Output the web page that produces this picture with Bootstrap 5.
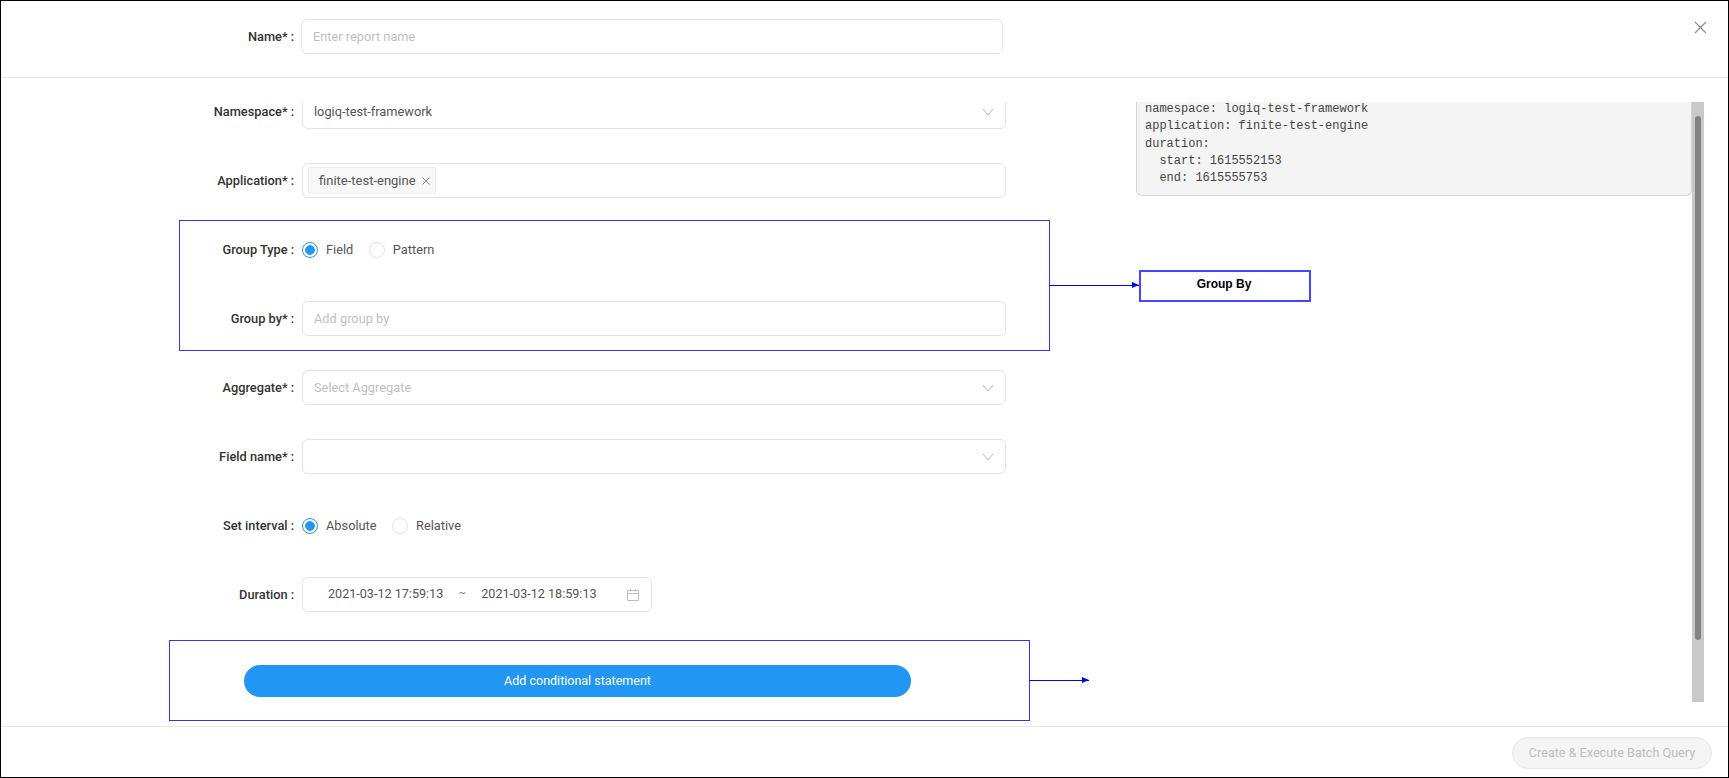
<!DOCTYPE html>
<html lang="en">

<head>
  <meta charset="UTF-8" />
  <title>Create Batch Query</title>
  <link href="https://cdn.jsdelivr.net/npm/bootstrap@5.3.2/dist/css/bootstrap.min.css" rel="stylesheet" />
  <style>
    html, body { height: 100%; overflow: hidden; }
    body { font-family: Roboto, "Liberation Sans", sans-serif; font-size: 12.8px; color: #555; background: #fff; }

    .page-frame { height: 100vh; border: 1px solid #000; position: relative; background: #fff; }

    .top-bar { height: 77px; padding-top: 18px; border-bottom: 1px solid #e6e6e6; position: relative; }
    .close-btn { position: absolute; top: 20px; right: 21px; border: 0; padding: 0; background: none; line-height: 0; }

    .mid-area { padding-top: 24px; height: 649px; border-bottom: 1px solid #e6e6e6; }
    .scroll-pane { height: 600px; overflow: hidden; }
    .scroll-inner { margin-top: -8px; }
    .form-side { width: 1135px; flex: none; }
    .query-side { width: 556px; flex: none; }

    .form-line { height: 35px; margin-bottom: 34px; }
    .field-label { width: 293px; margin-right: 8px; flex: none; font-weight: 500; color: #333; text-align: right; }
    .field-label span { margin-left: 3px; }
    .field-box { width: 704px; height: 35px; border: 1px solid #e4e4e4; border-radius: 6px; padding: 0 11px; color: #555; font-size: 12.8px; }
    .field-box::placeholder { color: #bfbfbf; }
    .hint-text { color: #bfbfbf; }
    .chevron { margin-left: auto; margin-right: 0; }

    .tag-chip { height: 27px; margin-left: -6px; padding: 0 5px 0 10px; gap: 6px; font-size: 13px; background: #f8f8f8; border: 1px solid #ececec; border-radius: 2px; }

    .radio-dot.form-check-input { width: 16px; height: 16px; margin: 0 8px 0 0; border: 1px solid #e2e2e2; flex: none; }
    .radio-dot.form-check-input:checked { border-color: #2196f3; background-color: #fff; background-image: radial-gradient(circle, #2196f3 0 4.5px, #fff 5px); }
    .radio-pair { margin-right: 15.5px; }

    .date-box { width: 350px; height: 35px; padding: 0 12px 0 25px; font-size: 12.6px; border: 1px solid #e4e4e4; border-radius: 6px; white-space: nowrap; }
    .date-sep { width: 38px; padding-bottom: 3px; text-align: center; font-size: 11px; color: #777; }

    .wide-btn { width: 667px; height: 32px; margin: 53px 0 0 243px; padding: 1px 0 0; border: 0; border-radius: 16px; background: #2196f3; color: #fff; font-size: 12.5px; }

    .yaml-panel { margin: 0; padding: 7px 8px 9px; height: 102px; overflow: hidden; background: #f4f4f4; border: 1px solid #d4d4d4; border-top: 0; border-radius: 0 0 6px 6px; font-family: "Liberation Mono", monospace; font-size: 12px; line-height: 17.25px; color: #444; }

    .scroll-track { width: 12px; margin-left: 0; background: #c9c9c9; padding: 14px 3px 62px; flex: none; }
    .scroll-thumb { height: 100%; background: #808384; border-radius: 3px; }

    .bottom-bar { height: 50px; padding: 10px 16px 0 0; }
    .run-btn { width: 200px; height: 32px; padding: 0; background: #f5f5f5; border: 1px solid #e8e8e8; border-radius: 16px; color: #bdbdbd; font-size: 12.6px; }

    /* blue notes drawn over the form */
    .note-box { position: absolute; border: 1px solid #3333ff; }
    .note-group { left: 178px; top: 219px; width: 871px; height: 131px; }
    .note-cond { left: 168px; top: 639px; width: 861px; height: 81px; }
    .note-arrow { position: absolute; height: 1px; background: #0000ff; }
    .note-arrow::after { content: ""; position: absolute; right: 0; top: -3px; border-left: 7px solid #0000ff; border-top: 3.5px solid transparent; border-bottom: 3.5px solid transparent; }
    .arrow-group { left: 1048px; top: 284px; width: 90px; }
    .arrow-cond { left: 1028px; top: 679px; width: 60px; }
    .note-title { position: absolute; left: 1138px; top: 269px; width: 172px; height: 32px; padding-bottom: 4px; padding-right: 2px; border: 2px solid #4646ff; font-family: "Liberation Sans", sans-serif; font-weight: 700; font-size: 12px; color: #000; }
  </style>
</head>

<body>
  <div class="page-frame">
    <!-- Header -->
    <div class="top-bar">
      <div class="d-flex align-items-center">
        <label class="field-label" style="margin-right:7px">Name*<span>:</span></label>
        <input type="text" class="field-box" style="width:702px" placeholder="Enter report name" />
      </div>
      <button class="close-btn" type="button" aria-label="Close">
        <svg width="13" height="13" viewBox="0 0 13 13" fill="none" stroke="#8c8c8c" stroke-width="1.1">
          <path d="M1 1L12 12M12 1L1 12" />
        </svg>
      </button>
    </div>

    <!-- Form and query preview -->
    <div class="mid-area">
      <div class="scroll-pane d-flex">
        <div class="form-side overflow-hidden">
          <div class="scroll-inner">
            <div class="form-line d-flex align-items-center">
              <label class="field-label">Namespace*<span>:</span></label>
              <div class="field-box d-flex align-items-center">
                <span>logiq-test-framework</span>
                <svg class="chevron" width="12" height="8" viewBox="0 0 12 8" fill="none" stroke="#b5b5b5"><path d="M1 1L6 7L11 1" /></svg>
              </div>
            </div>

            <div class="form-line d-flex align-items-center">
              <label class="field-label">Application*<span>:</span></label>
              <div class="field-box d-flex align-items-center">
                <div class="tag-chip d-flex align-items-center">
                  <span>finite-test-engine</span>
                  <svg width="8" height="8" viewBox="0 0 8 8" fill="none" stroke="#8c8c8c"><path d="M.5 .5L7.5 7.5M7.5 .5L.5 7.5" /></svg>
                </div>
              </div>
            </div>

            <div class="form-line d-flex align-items-center">
              <label class="field-label">Group Type<span>:</span></label>
              <div class="d-flex align-items-center">
                <div class="radio-pair d-flex align-items-center">
                  <input class="form-check-input radio-dot" type="radio" name="groupType" checked />
                  <span>Field</span>
                </div>
                <div class="radio-pair d-flex align-items-center">
                  <input class="form-check-input radio-dot" type="radio" name="groupType" />
                  <span>Pattern</span>
                </div>
              </div>
            </div>

            <div class="form-line d-flex align-items-center">
              <label class="field-label">Group by*<span>:</span></label>
              <input type="text" class="field-box" placeholder="Add group by" />
            </div>

            <div class="form-line d-flex align-items-center">
              <label class="field-label">Aggregate*<span>:</span></label>
              <div class="field-box d-flex align-items-center">
                <span class="hint-text">Select Aggregate</span>
                <svg class="chevron" width="12" height="8" viewBox="0 0 12 8" fill="none" stroke="#b5b5b5"><path d="M1 1L6 7L11 1" /></svg>
              </div>
            </div>

            <div class="form-line d-flex align-items-center">
              <label class="field-label">Field name*<span>:</span></label>
              <div class="field-box d-flex align-items-center">
                <svg class="chevron" width="12" height="8" viewBox="0 0 12 8" fill="none" stroke="#b5b5b5"><path d="M1 1L6 7L11 1" /></svg>
              </div>
            </div>

            <div class="form-line d-flex align-items-center">
              <label class="field-label">Set interval<span>:</span></label>
              <div class="d-flex align-items-center">
                <div class="radio-pair d-flex align-items-center">
                  <input class="form-check-input radio-dot" type="radio" name="interval" checked />
                  <span>Absolute</span>
                </div>
                <div class="radio-pair d-flex align-items-center">
                  <input class="form-check-input radio-dot" type="radio" name="interval" />
                  <span>Relative</span>
                </div>
              </div>
            </div>

            <div class="form-line d-flex align-items-center mb-0">
              <label class="field-label">Duration<span>:</span></label>
              <div class="date-box d-flex align-items-center">
                <span>2021-03-12 17:59:13</span>
                <span class="date-sep">~</span>
                <span>2021-03-12 18:59:13</span>
                <svg class="ms-auto" width="12" height="12" viewBox="0 0 12 12" fill="none" stroke="#bdbdbd"><path d="M.5 1.5H11.5V11.5H.5ZM.5 4.5H11.5M3.5 0V2.5M8.5 0V2.5" /></svg>
              </div>
            </div>

            <button type="button" class="wide-btn d-block">Add conditional statement</button>
          </div>
        </div>

        <div class="query-side overflow-hidden">
          <div class="scroll-inner">
            <pre class="yaml-panel">namespace: logiq-test-framework
application: finite-test-engine
duration:
  start: 1615552153
  end: 1615555753</pre>
          </div>
        </div>

        <div class="scroll-track">
          <div class="scroll-thumb"></div>
        </div>
      </div>
    </div>

    <!-- Footer -->
    <div class="bottom-bar d-flex justify-content-end">
      <button type="button" class="run-btn" disabled>Create &amp; Execute Batch Query</button>
    </div>

    <!-- Annotations -->
    <div class="note-box note-group"></div>
    <div class="note-arrow arrow-group"></div>
    <div class="note-title d-flex align-items-center justify-content-center">Group By</div>
    <div class="note-box note-cond"></div>
    <div class="note-arrow arrow-cond"></div>
  </div>
</body>

</html>
